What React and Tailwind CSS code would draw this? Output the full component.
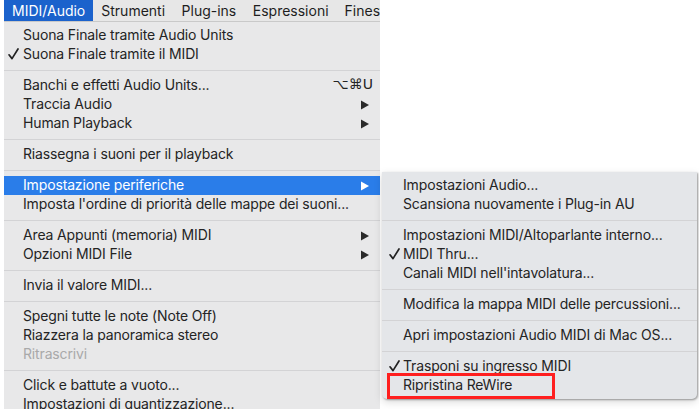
import React from "react";

const font = { fontFamily: "Inter, 'Noto Sans', sans-serif" };

function Arrow({ white }) {
  return (
    <svg width="8" height="10" viewBox="0 0 8 10" className="shrink-0">
      <polygon points="0,0.5 8,5 0,9.5" fill={white ? "#ffffff" : "#2a2a2a"} />
    </svg>
  );
}

function Check({ white, left }) {
  return (
    <svg
      width="11"
      height="12"
      viewBox="0 0 11 12"
      className={`absolute top-[3px] ${left}`}
    >
      <path
        d="M1 6.8 L4 10.6 L10 1"
        fill="none"
        stroke={white ? "#ffffff" : "#222222"}
        strokeWidth="1.7"
        strokeLinecap="round"
        strokeLinejoin="round"
      />
    </svg>
  );
}

function Row({ label, check, arrow, shortcut, active, disabled, sub }) {
  return (
    <div
      className={`relative flex items-center h-[19px] ${sub ? "pl-[21px]" : "pl-[19px]"} pr-[11px] text-[14px] leading-[19px] ${
        active ? "bg-[#2a7de9] text-white" : disabled ? "text-[#a9a9a9]" : "text-[#242424]"
      }`}
    >
      {check && <Check white={active} left={sub ? "left-[7px]" : "left-[4px]"} />}
      <span className="flex-1 whitespace-nowrap tracking-[-0.15px] pb-[2px]">{label}</span>
      {shortcut && (
        <span className="whitespace-nowrap text-[14px] mr-[-4px] pb-[2px]" style={{ fontFamily: "'DejaVu Sans', Inter, sans-serif" }}>
          {shortcut}
        </span>
      )}
      {arrow && <Arrow white={active} />}
    </div>
  );
}

function Sep() {
  return (
    <div className="h-[12px] flex items-center">
      <div className="h-px w-full bg-[#d3d3d5]" />
    </div>
  );
}

export default function App() {
  return (
    <div className="w-[699px] h-[409px] bg-white relative overflow-hidden" style={font}>
      <div className="ml-[4px] w-[376px]">
        <div className="h-[22px] flex items-stretch bg-[#e7e7e7] border-b border-[#c9c9c9] text-[14px] text-[#1e1e1e] whitespace-nowrap overflow-hidden">
          <div className="bg-[#1b62cc] text-white px-[8px] flex items-center">MIDI/Audio</div>
          <div className="pl-[8px] pr-[8px] flex items-center">Strumenti</div>
          <div className="px-[8.5px] flex items-center">Plug-ins</div>
          <div className="px-[8px] flex items-center">Espressioni</div>
          <div className="pl-[8px] flex items-center">Finestra</div>
        </div>
        <div className="bg-[#e8e8e9] pt-[4px] pb-[4px]">
          <Row label="Suona Finale tramite Audio Units" />
          <Row label="Suona Finale tramite il MIDI" check />
          <Sep />
          <Row label="Banchi e effetti Audio Units..." shortcut="⌥⌘U" />
          <Row label="Traccia Audio" arrow />
          <Row label="Human Playback" arrow />
          <Sep />
          <Row label="Riassegna i suoni per il playback" />
          <Sep />
          <Row label="Impostazione periferiche" arrow active />
          <Row label="Imposta l'ordine di priorità delle mappe dei suoni..." />
          <Sep />
          <Row label="Area Appunti (memoria) MIDI" arrow />
          <Row label="Opzioni MIDI File" arrow />
          <Sep />
          <Row label="Invia il valore MIDI..." />
          <Sep />
          <Row label="Spegni tutte le note (Note Off)" />
          <Row label="Riazzera la panoramica stereo" />
          <Row label="Ritrascrivi" disabled />
          <Sep />
          <Row label="Click e battute a vuoto..." />
          <Row label="Impostazioni di quantizzazione..." />
        </div>
      </div>

      <div className="absolute left-[382px] top-[172px] w-[315px] bg-[#e4e6e9] rounded-b-[5px] pt-[4px] pb-[4px] shadow-[1px_1px_2px_rgba(0,0,0,0.35),0_3px_8px_rgba(0,0,0,0.15)]">
        <Row sub label="Impostazioni Audio..." />
        <Row sub label="Scansiona nuovamente i Plug-in AU" />
        <Sep />
        <Row sub label="Impostazioni MIDI/Altoparlante interno..." />
        <Row sub label="MIDI Thru..." check />
        <Row sub label="Canali MIDI nell'intavolatura..." />
        <Sep />
        <Row sub label="Modifica la mappa MIDI delle percussioni..." />
        <Sep />
        <Row sub label="Apri impostazioni Audio MIDI di Mac OS..." />
        <Sep />
        <Row sub label="Trasponi su ingresso MIDI" check />
        <Row sub label="Ripristina ReWire" />
      </div>

      <div className="absolute left-[387px] top-[373px] w-[168px] h-[26px] border-[3px] border-[#ff1f1f]" />
    </div>
  );
}
